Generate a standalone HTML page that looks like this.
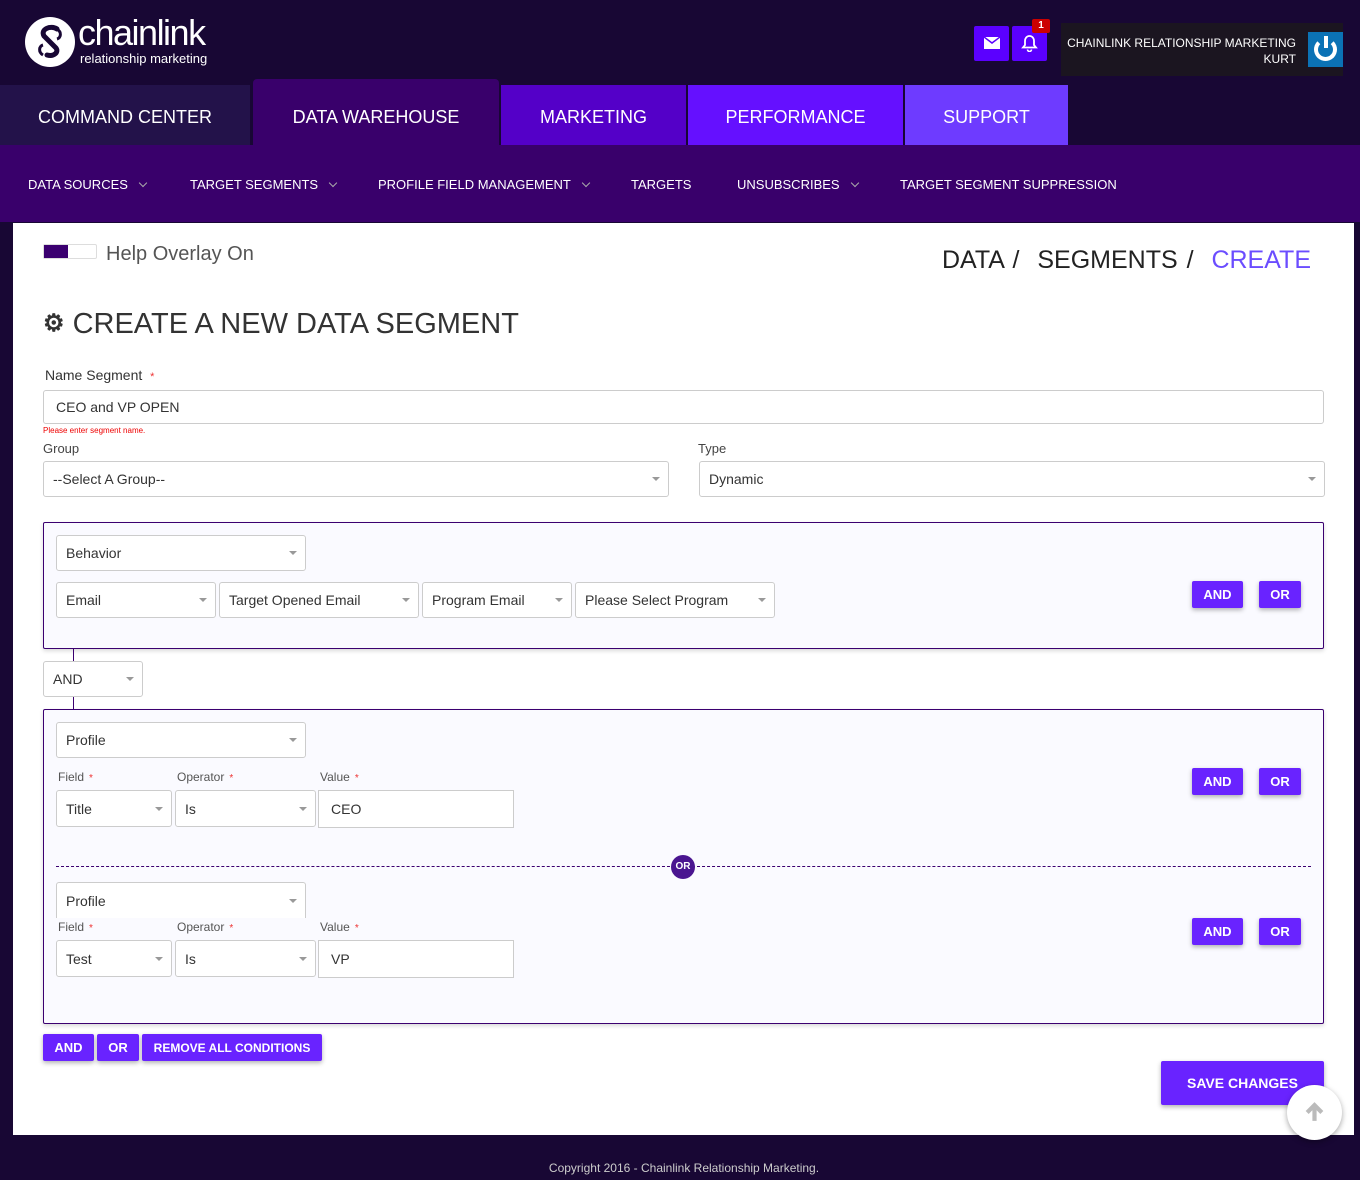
<!DOCTYPE html>
<html><head><meta charset="utf-8"><style>
*{box-sizing:border-box;margin:0;padding:0}
body{width:1360px;height:1180px;background:#180734;font-family:"Liberation Sans",sans-serif;position:relative;overflow:hidden}
.a{position:absolute}
.tab{position:absolute;top:85px;height:60px;color:#fff;font-size:18px;display:flex;align-items:center;justify-content:center;padding-top:4px}
.sub{position:absolute;top:177px;color:#fff;font-size:13px}
.sub .c{display:inline-block;width:6px;height:6px;border-right:1px solid #aaa;border-bottom:1px solid #aaa;transform:rotate(45deg);margin-left:12px;position:relative;top:-3px}
.sel{position:absolute;background:#fff;border:1px solid #ccc;border-radius:3px;font-size:14px;color:#333;padding-left:9px;display:flex;align-items:center}
.sel:after{content:"";position:absolute;right:8px;top:50%;margin-top:-2px;border:4px solid transparent;border-top:4px solid #999;border-bottom:0}
.inp{position:absolute;background:#fff;border:1px solid #ccc;font-size:14px;color:#333;padding-left:12px;display:flex;align-items:center}
.lbl{position:absolute;font-size:12px;color:#555}
.lbl b{color:#e33;font-weight:normal;margin-left:5px;font-size:10px}
.btn{position:absolute;background:#6923ff;color:#fff;font-weight:bold;font-size:13px;display:flex;align-items:center;justify-content:center;border-radius:2px;box-shadow:0 2px 5px rgba(0,0,0,.3)}
.box{position:absolute;left:43px;width:1281px;border:1px solid #3b0070;background:#fafaff;border-radius:2px;box-shadow:0 2px 4px rgba(0,0,0,.15)}
</style></head><body>
<!-- logo -->
<svg class="a" style="left:24px;top:16px" width="52" height="52" viewBox="0 0 52 52"><circle cx="26" cy="26" r="25" fill="#fff"/><path d="M33 13c-6-4-17 0-13 7l12 12c3 4-2 9-9 7" stroke="#180734" stroke-width="5" fill="none" stroke-linecap="round"/><path d="M19 39c-5-3-4-9 0-10M33 13c5 3 4 9 0 10" stroke="#180734" stroke-width="3" fill="none"/></svg>
<div class="a" style="left:78px;top:13px;color:#fff;font-size:36px;letter-spacing:-1.5px;line-height:40px">chainlink</div>
<div class="a" style="left:80px;top:51px;color:#fff;font-size:13px">relationship marketing</div>
<!-- top right -->
<div class="a" style="left:974px;top:26px;width:35px;height:35px;background:#5b00ff;border-radius:2px"></div>
<svg class="a" style="left:984px;top:37px" width="16" height="12" viewBox="0 0 16 12"><rect width="16" height="12" fill="#fff"/><path d="M0 0l8 6 8-6" stroke="#5b00ff" stroke-width="1.5" fill="none"/></svg>
<div class="a" style="left:1012px;top:26px;width:35px;height:35px;background:#5b00ff;border-radius:2px"></div>
<svg class="a" style="left:1021px;top:34px" width="17" height="18" viewBox="0 0 17 18"><path d="M8.5 2c-3 0-4.5 2.5-4.5 5v4l-2 2.5h13l-2-2.5v-4c0-2.5-1.5-5-4.5-5z" stroke="#fff" stroke-width="1.8" fill="none"/><path d="M6.5 15.5a2 2 0 004 0" stroke="#fff" stroke-width="1.6" fill="none"/></svg>
<div class="a" style="left:1032px;top:19px;width:18px;height:14px;background:#c00;color:#fff;font-size:10px;font-weight:bold;text-align:center;line-height:14px;border-radius:2px">1</div>
<div class="a" style="left:1061px;top:23px;width:282px;height:53px;background:#1b1520"></div>
<div class="a" style="left:1066px;top:35px;width:230px;text-align:right;color:#fff;font-size:12px;line-height:16px">CHAINLINK RELATIONSHIP MARKETING<br>KURT</div>
<div class="a" style="left:1308px;top:32px;width:35px;height:35px;background:#0b72b5"></div>
<div class="a" style="left:1314px;top:38px;width:23px;height:23px;border:4px solid #fff;border-top-color:transparent;border-radius:50%"></div>
<div class="a" style="left:1324px;top:36px;width:4px;height:12px;background:#fff"></div>
<!-- tabs -->
<div class="tab" style="left:0;width:250px;background:#23124a">COMMAND CENTER</div>
<div class="tab" style="left:253px;top:79px;height:66px;width:246px;background:#39006b;border-radius:4px 4px 0 0;padding-top:10px">DATA WAREHOUSE</div>
<div class="tab" style="left:501px;width:185px;background:#5400c8">MARKETING</div>
<div class="tab" style="left:688px;width:215px;background:#6510ff">PERFORMANCE</div>
<div class="tab" style="left:905px;width:163px;background:#6e3bff">SUPPORT</div>
<div class="a" style="left:0;top:145px;width:1360px;height:77px;background:#39006b"></div>
<div class="sub" style="left:28px">DATA SOURCES<span class="c"></span></div>
<div class="sub" style="left:190px">TARGET SEGMENTS<span class="c"></span></div>
<div class="sub" style="left:378px">PROFILE FIELD MANAGEMENT<span class="c"></span></div>
<div class="sub" style="left:631px">TARGETS</div>
<div class="sub" style="left:737px">UNSUBSCRIBES<span class="c"></span></div>
<div class="sub" style="left:900px">TARGET SEGMENT SUPPRESSION</div>
<!-- panel -->
<div class="a" style="left:13px;top:223px;width:1341px;height:912px;background:#fff"></div>
<div class="a" style="left:43px;top:244px;width:54px;height:15px;border:1px solid #ddd;border-radius:2px;background:#fff"></div>
<div class="a" style="left:44px;top:245px;width:24px;height:13px;background:#3b0070"></div>
<div class="a" style="left:106px;top:243px;font-size:20px;color:#555">Help Overlay On</div>
<div class="a" style="left:942px;top:246px;font-size:25px;color:#222;word-spacing:2px;white-space:nowrap">DATA / &nbsp;SEGMENTS / &nbsp;<span style="color:#6b4dff">CREATE</span></div>
<div class="a" style="left:43px;top:308px;font-size:29px;color:#333;white-space:nowrap"><span style="font-size:24px;font-weight:bold;position:relative;top:-2px">&#9881;</span> CREATE A NEW DATA SEGMENT</div>
<div class="a" style="left:45px;top:367px;font-size:14px;color:#333">Name Segment <span style="color:#e33;font-size:11px;margin-left:4px">*</span></div>
<div class="inp" style="left:43px;top:390px;width:1281px;height:34px;border-radius:3px">CEO and VP OPEN</div>
<div class="a" style="left:43px;top:426px;font-size:8px;color:#e00">Please enter segment name.</div>
<div class="a" style="left:43px;top:441px;font-size:13px;color:#444">Group</div>
<div class="a" style="left:698px;top:441px;font-size:13px;color:#444">Type</div>
<div class="sel" style="left:43px;top:461px;width:626px;height:36px">--Select A Group--</div>
<div class="sel" style="left:699px;top:461px;width:626px;height:36px">Dynamic</div>
<!-- box 1 -->
<div class="box" style="top:522px;height:127px"></div>
<div class="sel" style="left:56px;top:535px;width:250px;height:36px">Behavior</div>
<div class="sel" style="left:56px;top:582px;width:160px;height:36px">Email</div>
<div class="sel" style="left:219px;top:582px;width:200px;height:36px">Target Opened Email</div>
<div class="sel" style="left:422px;top:582px;width:150px;height:36px">Program Email</div>
<div class="sel" style="left:575px;top:582px;width:200px;height:36px">Please Select Program</div>
<div class="btn" style="left:1192px;top:581px;width:51px;height:27px">AND</div>
<div class="btn" style="left:1259px;top:581px;width:42px;height:27px">OR</div>
<div class="a" style="left:73px;top:649px;width:1px;height:12px;background:#3b0070"></div>
<div class="sel" style="left:43px;top:661px;width:100px;height:36px">AND</div>
<div class="a" style="left:73px;top:697px;width:1px;height:12px;background:#3b0070"></div>
<!-- box 2 -->
<div class="box" style="top:709px;height:315px"></div>
<div class="sel" style="left:56px;top:722px;width:250px;height:36px">Profile</div>
<div class="lbl" style="left:58px;top:770px">Field<b>*</b></div>
<div class="lbl" style="left:177px;top:770px">Operator<b>*</b></div>
<div class="lbl" style="left:320px;top:770px">Value<b>*</b></div>
<div class="sel" style="left:56px;top:790px;width:116px;height:37px">Title</div>
<div class="sel" style="left:175px;top:790px;width:141px;height:37px">Is</div>
<div class="inp" style="left:318px;top:790px;width:196px;height:38px">CEO</div>
<div class="btn" style="left:1192px;top:768px;width:51px;height:27px">AND</div>
<div class="btn" style="left:1259px;top:768px;width:42px;height:27px">OR</div>
<div class="a" style="left:56px;top:866px;width:1255px;border-top:1px dashed #3b0070"></div>
<div class="a" style="left:671px;top:855px;width:24px;height:24px;border-radius:50%;background:#4a1590;color:#fff;font-size:10px;font-weight:bold;text-align:center;line-height:24px">OR</div>
<div class="sel" style="left:56px;top:882px;width:250px;height:36px;border-bottom:none;border-radius:3px 3px 0 0">Profile</div>
<div class="lbl" style="left:58px;top:920px">Field<b>*</b></div>
<div class="lbl" style="left:177px;top:920px">Operator<b>*</b></div>
<div class="lbl" style="left:320px;top:920px">Value<b>*</b></div>
<div class="sel" style="left:56px;top:940px;width:116px;height:37px">Test</div>
<div class="sel" style="left:175px;top:940px;width:141px;height:37px">Is</div>
<div class="inp" style="left:318px;top:940px;width:196px;height:38px">VP</div>
<div class="btn" style="left:1192px;top:918px;width:51px;height:27px">AND</div>
<div class="btn" style="left:1259px;top:918px;width:42px;height:27px">OR</div>
<div class="btn" style="left:43px;top:1034px;width:51px;height:27px">AND</div>
<div class="btn" style="left:97px;top:1034px;width:42px;height:27px">OR</div>
<div class="btn" style="left:142px;top:1034px;width:180px;height:27px;font-size:12px">REMOVE ALL CONDITIONS</div>
<div class="btn" style="left:1161px;top:1061px;width:163px;height:44px;font-size:14px">SAVE CHANGES</div>
<div class="a" style="left:1287px;top:1085px;width:55px;height:55px;border-radius:50%;background:#fff;box-shadow:0 2px 6px rgba(0,0,0,.35)"></div>
<svg class="a" style="left:1304px;top:1102px" width="21" height="21" viewBox="0 0 20 20"><path d="M10 3v15M3 10l7-7 7 7" stroke="#bbb" stroke-width="4" fill="none"/></svg>
<div class="a" style="left:0;top:1161px;width:1368px;text-align:center;font-size:12px;color:#ccc">Copyright 2016 - Chainlink Relationship Marketing.</div>
</body></html>
